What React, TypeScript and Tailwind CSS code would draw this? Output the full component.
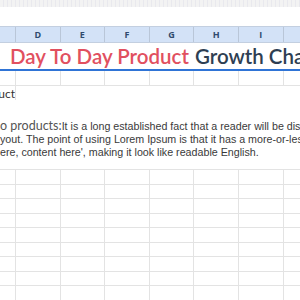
const COLS = ['D', 'E', 'F', 'G', 'H', 'I', 'J'];
const ROW_HEIGHTS = ['h-[15px]', 'h-[14px]', 'h-[15px]', 'h-[14px]', 'h-[15px]', 'h-[14px]', 'h-[15px]', 'h-[14px]', 'h-[15px]'];

function GridRow({ height }: { height: string }) {
  return (
    <div className={`flex ${height} border-b border-[#e3e3e3]`}>
      <div className="w-[16px] shrink-0 border-r border-[#e3e3e3]" />
      {COLS.map((c) => (
        <div key={c} className="w-[44.6px] shrink-0 border-r border-[#e3e3e3]" />
      ))}
    </div>
  );
}

export default function App() {
  return (
    <div className="w-[300px] h-[300px] overflow-hidden bg-white font-['Liberation_Sans',Arial,sans-serif]">
      {/* toolbar edge */}
      <div className="h-[7px] bg-[repeating-linear-gradient(90deg,#f3f3f3_0px,#f3f3f3_3px,#e9e9ee_3px,#e9e9ee_4px)]" />
      <div className="h-[19px]" />

      {/* column headers */}
      <div className="flex h-[17px] bg-[#d3e2f7] border-y border-[#c3cfe0]">
        <div className="w-[16px] shrink-0 border-r border-[#b9c6d8]" />
        {COLS.map((c) => (
          <div
            key={c}
            className="w-[44.6px] shrink-0 border-r border-[#b9c6d8] flex items-center justify-center text-[9px] font-bold text-[#2f4a6e] font-['Open_Sans',sans-serif]"
          >
            {c === 'J' ? '' : c}
          </div>
        ))}
      </div>

      {/* title */}
      <div className="h-[28px] border-b-2 border-[#2f74d6] flex items-center whitespace-nowrap pl-[10px] font-['Lato',sans-serif] text-[20.5px] font-semibold">
        <span className="text-[#e1505f]">Day To Day Product</span>
        <span className="text-[#2e3e52] ml-[6px]">Growth Chart</span>
      </div>

      <GridRow height="h-[15px]" />

      {/* product row */}
      <div className="flex h-[14px]">
        <div className="w-[16px] shrink-0 border-r border-[#e3e3e3] overflow-hidden whitespace-nowrap text-[12px] leading-[14px] text-[#333] font-['Lato',sans-serif] flex justify-end pt-[1px]">
          uct
        </div>
      </div>

      {/* description block */}
      <div className="h-[70px] border-b border-[#e3e3e3] pt-[19px] whitespace-nowrap overflow-hidden text-[10.7px] leading-[13px] text-[#3a3a3a]">
        <div className="flex items-baseline">
          <span className="font-['Lato',sans-serif] text-[12.5px] text-[#555]">o products:</span>
          <span>It is a long established fact that a reader will be distracted</span>
        </div>
        <div>yout. The point of using Lorem Ipsum is that it has a more-or-less normal</div>
        <div>ere, content here', making it look like readable English.</div>
      </div>

      {ROW_HEIGHTS.map((h, i) => (
        <GridRow key={i} height={h} />
      ))}
    </div>
  );
}
